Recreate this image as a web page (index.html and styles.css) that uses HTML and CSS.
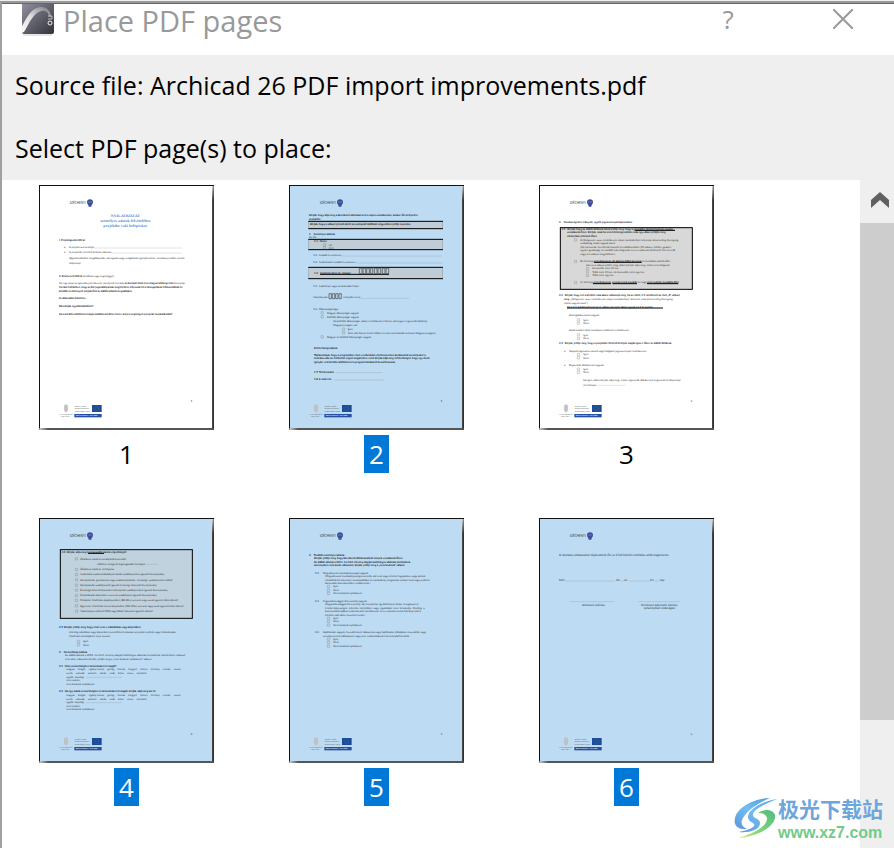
FILE: index.html
```
<!DOCTYPE html>
<html lang="en">
<head>
    <meta charset="UTF-8">
    <meta name="viewport" content="width=device-width, initial-scale=1.0">
    <title>Place PDF pages</title>
    <link rel="stylesheet" href="styles.css">
</head>
<body>

<!-- shared parts of the page previews -->
<svg class="defs" width="0" height="0" aria-hidden="true">
    <defs>
        <linearGradient id="edgeRight" x1="0" y1="0" x2="0" y2="1">
            <stop offset="0" stop-color="#ccc"/>
            <stop offset="0.06" stop-color="#444"/>
            <stop offset="1" stop-color="#444"/>
        </linearGradient>
        <linearGradient id="edgeBottom" x1="0" y1="0" x2="1" y2="0">
            <stop offset="0" stop-color="#ccc"/>
            <stop offset="0.05" stop-color="#555"/>
            <stop offset="1" stop-color="#555"/>
        </linearGradient>
        <g id="box"><path d="M1 -6h7v7h-7z" fill="none" stroke="#777" stroke-width="1"/></g>
        <g id="sheet">
            <rect x="27" y="15" width="525" height="735" fill="#111"/>
            <rect x="546" y="18" width="5" height="732" fill="url(#edgeRight)"/>
            <rect x="28" y="744" width="523" height="6" fill="url(#edgeBottom)"/>
            <rect class="paper" x="30" y="18" width="516" height="726"/>
            <text class="brand" x="119" y="71">SZÉCHENYI</text>
            <path d="M171 66q0-7 9-8q9 1 9 8q0 6-4 9l-1 5h-8l-1-5q-4-3-4-9z" fill="#3d4d98"/>
            <path d="M175 66h4m2 0h4" stroke="#a9b2dc" stroke-width="2"/>
            <path d="M103 678q0-4 5-4q5 0 5 4v12q-1 5-5 7q-4-2-5-7zM102 683h12M108 674v22M103 689h10" fill="#ccc" stroke="#aaa" stroke-width="1"/>
            <text class="tiny" x="87" y="704">MAGYARORSZÁG</text>
            <text class="tiny" x="93" y="710">KORMÁNYA</text>
            <text class="tiny" x="134" y="681">EURÓPAI UNIÓ</text>
            <text class="tiny" x="134" y="688">Európai Strukturális</text>
            <text class="tiny" x="134" y="695">és Beruházási Alapok</text>
            <rect x="186" y="675" width="29" height="21" fill="#1c4c9c"/>
            <circle cx="200" cy="686" r="6" fill="none" stroke="#7d8a5e" stroke-width="2" stroke-dasharray="1 2"/>
            <rect x="133" y="702" width="82" height="10" fill="#2650a0"/>
            <text class="tiny invert" x="137" y="709">BEFEKTETÉS A JÖVŐBE</text>
        </g>
    </defs>
</svg>

<div class="dialog">
    <header class="titlebar">
        <svg class="app-icon" viewBox="0 0 36 34" aria-hidden="true">
            <defs>
                <linearGradient id="tile" x1="0" y1="0" x2="1" y2="1">
                    <stop offset="0" stop-color="#8f8fa0"/>
                    <stop offset="1" stop-color="#33333a"/>
                </linearGradient>
                <linearGradient id="arc" x1="0" y1="1" x2="1" y2="0">
                    <stop offset="0" stop-color="#fff"/>
                    <stop offset="0.5" stop-color="#ddd"/>
                    <stop offset="1" stop-color="#777782"/>
                </linearGradient>
            </defs>
            <path d="M3 0h32v28q0 2-2 2H5q-2 0-2-2z" fill="url(#tile)"/>
            <path d="M4 31h29" stroke="#ccc" stroke-width="1"/>
            <path d="M0 27C7 17 10 4 22 3C29 3 32 8 32 13L30 13C30 9 27 6 22 7C14 9 10 20 5 28Q1 30 0 27z" fill="url(#arc)"/>
            <path d="M29 12h4v3h-4" fill="none" stroke="#bbb" stroke-width="1"/>
            <circle cx="31" cy="19" r="2" fill="none" stroke="#eee" stroke-width="1"/>
        </svg>
        <h1>Place PDF pages</h1>
        <button type="button" class="help" aria-label="Help">?</button>
        <button type="button" class="close" aria-label="Close">
            <svg viewBox="0 0 20 20" aria-hidden="true"><path d="M0 0l20 20M20 0L0 20"/></svg>
        </button>
    </header>

    <section class="info">
        <p>Source file: Archicad 26 PDF import improvements.pdf</p>
        <p>Select PDF page(s) to place:</p>
    </section>

    <main class="browser">
        <div class="pages">
            <button type="button" class="page" aria-pressed="false">
                <svg class="preview" viewBox="27 15 525 735" aria-hidden="true">
                    <use href="#sheet"/>
                    <g class="heading">
                        <text x="286" y="110">NYILATKOZAT</text>
                        <text x="286" y="125">személyes adatok felvételéhez</text>
                        <text x="286" y="140">projektbe való belépéskor</text>
                    </g>
                    <g class="bold">
                        <text x="87" y="184">I. Projektgazda tölti ki:</text>
                        <text x="87" y="324">forrást érdekében, hogy az EU jogszabályainak megfelelően tehessük fel a támogatások felhasználását és</text>
                        <text x="87" y="336">később eredményeit, kérjük Önt az alábbi adatok megadására.</text>
                        <text x="87" y="358">A válaszadás önkéntes.</text>
                        <text x="87" y="380">Köszönjük együttműködését!</text>
                        <text x="87" y="405">Ha a kérdőív kitöltésével kapcsolatban kérdése lenne, kérjen segítséget a projekt munkatársától!</text>
                    </g>
                    <text x="102" y="205">•</text>
                    <text x="117" y="205">A projekt azonosítója:</text>
                    <text x="102" y="220">•</text>
                    <text x="117" y="220">A projektbe történő belépés dátuma:</text>
                    <path class="dots" d="M192 204h263M247 219h208"/>
                    <text x="117" y="236">(Együttműködési megállapodás, támogatás vagy szolgáltatás igénybevétele, munkaszerződés esetén</text>
                    <text x="117" y="252">időpontja)</text>
                    <text x="87" y="290"><tspan class="strong">II. Résztvevő tölti ki</tspan> (önállóan vagy segítséggel)</text>
                    <text x="87" y="312">Ön egy olyan programba jelentkezett, amelynek forrását <tspan class="strong">az Európai Unió és a magyar költségvetés</tspan> biztosítja.</text>
                    <text x="482" y="667">1</text>
                </svg>
                <span class="number">1</span>
            </button>

            <button type="button" class="page selected" aria-pressed="true">
                <svg class="preview" viewBox="27 15 525 735" aria-hidden="true">
                    <use href="#sheet"/>
                    <g class="shade">
                        <rect x="86" y="124" width="402" height="22"/>
                        <rect x="86" y="178" width="402" height="31"/>
                        <rect x="86" y="262" width="402" height="34"/>
                    </g>
                    <path class="rule" d="M85 124h404M85 146h404M85 178h404M85 209h404M85 262h404M85 296h404M120 283h207"/>
                    <g class="bold">
                        <text x="87" y="108">Kérjük, hogy adja meg a következő adatokat arra a napra vonatkozóan, amikor Ön belépett a</text>
                        <text x="87" y="120">projektbe.</text>
                        <text x="90" y="136">Kérjük, hogy a választ jelentő körét az oszlopnál található négyzetben jelölje a pontos</text>
                        <text x="87" y="164">1.    Személyes adatok</text>
                        <text x="102" y="186">1.1.  Neme:</text>
                        <text x="102" y="281">1.4.   Születési ideje (év, hónap)</text>
                        <text x="102" y="506">Elérhetőségi adatok</text>
                        <text x="102" y="527">Tájékoztatjuk, hogy a programban részt vevők közül véletlenszerűen kiválasztott személyeket a</text>
                        <text x="102" y="538">lezárása után az értékelést végző megkérdezi, ezért kérjük adja meg elérhetőségét, hogy egy rövid,</text>
                        <text x="102" y="548">igénybe vett kérdőív kitöltésével a program hatásairól beszélhessünk.</text>
                        <text x="102" y="580">1.7. Telefonszám:</text>
                        <text x="102" y="601">1.8. E-mail cím:</text>
                    </g>
                    <text x="87" y="175">Az Ön</text>
                    <use href="#box" x="129" y="197"/><text x="146" y="197">nő</text>
                    <use href="#box" x="129" y="206"/><text x="146" y="206">férfi</text>
                    <text x="100" y="229">1.2.  Családi és utóneve:</text>
                    <text x="100" y="250">1.3.  Születéskori családi és utóneve:</text>
                    <path class="dots" d="M184 228h303M228 249h259M242 355h145M169 578h139M162 600h148"/>
                    <path class="digits" d="M238 265h8v16h-8zM249 265h8v16h-8zM260 265h8v16h-8zM271 265h7v16h-7zM283 265h8v16h-8zM294 265h8v16h-8zM307 265h8v16h-8zM318 265h8v16h-8zM147 341h7v15h-7zM157 341h7v15h-7zM167 341h7v15h-7zM177 341h7v15h-7z"/>
                    <text x="100" y="320">1.5.  Lakóhelye vagy tartózkodási helye:</text>
                    <text x="99" y="355">irányítószám:</text>
                    <text x="190" y="355">település neve:</text>
                    <text x="100" y="389">1.6.  Állampolgársága</text>
                    <use href="#box" x="122" y="401"/><text x="141" y="401">Magyar állampolgár vagyok</text>
                    <use href="#box" x="122" y="413"/><text x="141" y="413">Külföldi állampolgár vagyok</text>
                    <text x="160" y="425">Ha külföldi állampolgár, akkor rendelkezik-e három vármegyei regisztrált lakóhely</text>
                    <text x="160" y="437">Magyarországon-val:</text>
                    <use href="#box" x="186" y="450"/><text x="203" y="450">Igen</text>
                    <use href="#box" x="186" y="461"/><text x="203" y="461">Nem (Ha három évnél többet és nem tartózkodik tartósan Magyarországon)</text>
                    <use href="#box" x="122" y="473"/><text x="141" y="473">Magyar és külföldi állampolgár vagyok</text>
                    <text x="482" y="667">1</text>
                </svg>
                <span class="number">2</span>
            </button>

            <button type="button" class="page" aria-pressed="false">
                <svg class="preview" viewBox="27 15 525 735" aria-hidden="true">
                    <use href="#sheet"/>
                    <rect class="frame" x="91" y="143" width="396" height="185"/>
                    <path class="rule" d="M314 151h121M192 247h143M189 311h54M247 311h74M351 311h94M111 384h288"/>
                    <g class="bold">
                        <text x="87" y="129">2.    Munkavégzésre irányuló, egyéb jogviszonnyal kapcsolatos</text>
                        <text x="95" y="150">2.1.  Kérjük, hogy az alábbi állítások közül jelölje meg, hogy a projektbe történő belépés napján</text>
                        <text x="111" y="160">vonatkozik Önre. Kérjük, csak ha nem lehetséges közös csak egy válasz jelöljön meg</text>
                        <text x="111" y="171">elsősorban jellemző Önre.</text>
                        <text x="87" y="348">2.2.  Kérjük, hogy ezt a kérdést csak akkor válaszolja meg, ha az előző, 2.1. kérdésnél az első „A” választ</text>
                        <text x="102" y="359">meg.<tspan class="plain"> („Dolgozom, azaz rendelkezem olyan munkahellyel, ahonnan csak átmenetileg (betegség,</tspan></text>
                        <text x="111" y="383">Ha a 2.1. kérdésnél nem az 1. válasz szerepel, akkor ugorjon a 2.3. pontra</text>
                        <text x="87" y="493">2.3.  Kérjük, jelölje meg, hogy a projektbe történő belépés napján igaz-e Önre az alábbi állítások</text>
                    </g>
                    <use href="#box" x="132" y="182"/><text x="151" y="182">A) Dolgozom, azaz rendelkezem olyan munkahellyel, ahonnan átmenetileg (betegség,</text>
                    <text x="151" y="193">szabadság miatt) vagyok távol.</text>
                    <text x="151" y="204">(Ide tartoznak, ha tehetik hasonló és vállalkozóként (10 válasz). Jelölés, gyakori</text>
                    <text x="151" y="214">egyéni gazdasági, és további más dolgozók, és ez is adózott kérdésnél, ha nem a B</text>
                    <text x="151" y="225">vagy a C választ megjelölheti.)</text>
                    <use href="#box" x="132" y="247"/><text x="151" y="247">B) Jelenleg <tspan class="strong">nem dolgozom, de aktívan állást keresek</tspan> és munkába tudnék állni.</text>
                    <text x="169" y="257">Ha ezt a választ jelölte meg, akkor kérjük, adja meg, mióta nem dolgozik:</text>
                    <use href="#box" x="168" y="268"/><text x="187" y="268">Kevesebb, mint fél éve</text>
                    <use href="#box" x="168" y="278"/><text x="187" y="278">Több mint fél éve, de kevesebb, mint egy éve</text>
                    <use href="#box" x="168" y="289"/><text x="187" y="289">Több mint egy éve</text>
                    <use href="#box" x="132" y="310"/><text x="151" y="310">C) Jelenleg <tspan class="strong">nem dolgozom, nem keresek munkát</tspan> és/vagy <tspan class="strong">nem tudnék munkába állni</tspan></text>
                    <text x="102" y="373">miatt) vagyok távol”).</text>
                    <text x="117" y="407">Közfoglalkoztatott vagyok.</text>
                    <use href="#box" x="141" y="422"/><text x="160" y="422">Igen</text>
                    <use href="#box" x="141" y="432"/><text x="160" y="432">Nem</text>
                    <text x="117" y="452">Határozatlan idejű munkaszerződéssel rendelkezem.</text>
                    <use href="#box" x="141" y="467"/><text x="160" y="467">Igen</text>
                    <use href="#box" x="141" y="478"/><text x="160" y="478">Nem</text>
                    <text x="102" y="516">a</text><text x="117" y="516">Nappali tagozatos tanuló vagy hallgatói jogviszonnyal rendelkezem.</text>
                    <use href="#box" x="141" y="526"/><text x="160" y="526">Igen</text>
                    <use href="#box" x="141" y="536"/><text x="160" y="536">Nem</text>
                    <text x="102" y="559">•</text><text x="117" y="559">Regisztrált álláskereső vagyok.</text>
                    <use href="#box" x="141" y="570"/><text x="160" y="570">Igen</text>
                    <use href="#box" x="141" y="580"/><text x="160" y="580">Nem</text>
                    <text x="160" y="602">Ha igen, akkor kérjük, adja meg, mióta regisztrált álláskereső (regisztráció időpontja):</text>
                    <text x="160" y="617">(év/hónap)</text>
                    <path class="dots" d="M200 616h86"/>
                    <text x="482" y="667">3</text>
                </svg>
                <span class="number">3</span>
            </button>

            <button type="button" class="page selected" aria-pressed="true">
                <svg class="preview" viewBox="27 15 525 735" aria-hidden="true">
                    <use href="#sheet"/>
                    <rect class="frame" x="91" y="110" width="396" height="206"/>
                    <path class="rule" d="M174 121h48"/>
                    <g class="bold">
                        <text x="95" y="119">2.4. Kérjük, adja meg legmagasabb iskolai végzettségét:</text>
                        <text x="87" y="346">2.5. Kérjük, jelölje meg, hogy részt vesz-e oktatásban vagy képzésben:</text>
                        <text x="87" y="419">3.    Nemzetiségi adatok</text>
                        <text x="87" y="461">3.1.  Mely nemzetiséghez tartozónak érzi magát?</text>
                        <text x="87" y="537">3.2.  Ha egy másik nemzetiséghez is tartozónak érzi magát, kérjük, adja meg azt is!</text>
                    </g>
                    <use href="#box" x="135" y="140"/><text x="151" y="140">Általános iskola 8 osztályánál kevesebb:</text>
                    <text x="201" y="155">ebből az elvégzett legmagasabb évfolyam:</text>
                    <path class="dots" d="M352 154h33"/>
                    <use href="#box" x="135" y="172"/><text x="151" y="172">Általános iskola 8. évfolyama</text>
                    <use href="#box" x="135" y="187"/><text x="151" y="187">Szakiskola (szakmunkásképző iskola) szakképesítést igazoló bizonyítvány</text>
                    <use href="#box" x="135" y="203"/><text x="151" y="203">Középiskolai, gimnáziumi vagy szakközépiskolai, -érettségi, szakképesítés nélkül</text>
                    <use href="#box" x="135" y="219"/><text x="151" y="219">Középiskolai szakképesítő igazoló érettségi, képesítő bizonyítvány</text>
                    <use href="#box" x="135" y="234"/><text x="151" y="234">Érettségit követő képzésben (középfok) szakképesítést igazoló bizonyítvány</text>
                    <use href="#box" x="135" y="250"/><text x="151" y="250">Felsőoktatás képzésben szerzett szakképzést igazoló bizonyítvány</text>
                    <use href="#box" x="135" y="265"/><text x="151" y="265">Főiskolai, felsőfokú alapképzésben (BA/BSc) szerzett vagy azzal egyenértékű oklevél</text>
                    <use href="#box" x="135" y="281"/><text x="151" y="281">Egyetemi, felsőfokú mesterképzésben (MA/MSc) szerzett vagy azzal egyenértékű oklevél</text>
                    <use href="#box" x="135" y="297"/><text x="151" y="297">Tudományos oklevél (PhD vagy DLA) fokozatot igazoló oklevél</text>
                    <text x="117" y="361">Jelenleg iskolában vagy képzésben (szemléltető oktatást a projekt mellett) vagy felsőoktatási</text>
                    <text x="117" y="372">felsőfokú tanulójaként részt veszek.</text>
                    <use href="#box" x="141" y="388"/><text x="160" y="388">Igen</text>
                    <use href="#box" x="141" y="398"/><text x="160" y="398">Nem</text>
                    <text x="105" y="429">Az alábbi adatok a 2011. évi CLVI. törvény alapján különleges adatnak minősülnek. Ha kérdésre válaszol</text>
                    <text x="105" y="440">nem akar, válaszolni kérdés, jelölje meg a „nem kívánok nyilatkozni” választ.</text>
                    <text x="109" y="472">magyar,    bolgár,    cigány (roma),    görög,    horvát,    lengyel,    német,    örmény,    román,    ruszin,</text>
                    <text x="109" y="483">szerb,    szlovák,    szlovén,    ukrán,    arab,    kínai,    orosz,    vietnámi</text>
                    <text x="109" y="549">magyar,    bolgár,    cigány (roma),    görög,    horvát,    lengyel,    német,    örmény,    román,    ruszin,</text>
                    <text x="109" y="560">szerb,    szlovák,    szlovén,    ukrán,    arab,    kínai,    orosz,    vietnámi</text>
                    <text x="109" y="494">egyéb, éspedig:</text>
                    <text x="109" y="505">nem tudom,</text>
                    <text x="109" y="516">nem kívánok nyilatkozni</text>
                    <text x="109" y="570">egyéb, éspedig:</text>
                    <text x="109" y="581">nem tudom,</text>
                    <text x="109" y="592">nem kívánok nyilatkozni</text>
                    <path class="dots" d="M168 493h107M168 569h107"/>
                    <text x="482" y="667">4</text>
                </svg>
                <span class="number">4</span>
            </button>

            <button type="button" class="page selected" aria-pressed="true">
                <svg class="preview" viewBox="27 15 525 735" aria-hidden="true">
                    <use href="#sheet"/>
                    <g class="bold">
                        <text x="87" y="128">4.    További személyes adatok</text>
                        <text x="102" y="139">Kérjük, jelölje meg, hogy következő állítások közül melyek vonatkozik Önre.</text>
                        <text x="102" y="150">Az alábbi adatok a 2011. évi CXII. törvény alapján különleges adatnak minősülnek.</text>
                        <text x="102" y="160">amennyiben nem kíván válaszolni, kérjük, jelölje meg a „nem kívánok” választ.</text>
                    </g>
                    <text x="105" y="182">4.1.</text><text x="129" y="182">Megváltozott munkaképességű vagyok.</text>
                    <text x="135" y="192">(Megváltozott munkaképességű személy, aki testi vagy értelmi fogyatékos, vagy akinek</text>
                    <text x="135" y="203">rehabilitációt követően munkavállalási és munkahely-megtartási esélyei testi vagy szellemi</text>
                    <text x="135" y="213">károsodás következtében csökkennek.)</text>
                    <use href="#box" x="141" y="223"/><text x="160" y="223">Igen</text>
                    <use href="#box" x="141" y="234"/><text x="160" y="234">Nem</text>
                    <use href="#box" x="141" y="244"/><text x="160" y="244">Nem kívánok nyilatkozni</text>
                    <text x="105" y="266">4.2.</text><text x="129" y="266">Fogyatékossággal élő személy vagyok.</text>
                    <text x="135" y="276">(Fogyatékossággal élő személy: aki ortopéniai, így különösen látási, mozgásszervi</text>
                    <text x="135" y="287">értelmi képességeit  jelentős  mértékben  vagy  egyáltalán  nem  birtokolja,  illetőleg  a</text>
                    <text x="135" y="297">kommunikációjában számottevően korlátozott, és ez számára tartós hátrányt jelent</text>
                    <text x="135" y="308">életben való aktív részvétel során.)</text>
                    <use href="#box" x="141" y="318"/><text x="160" y="318">Igen</text>
                    <use href="#box" x="141" y="328"/><text x="160" y="328">Nem</text>
                    <use href="#box" x="141" y="339"/><text x="160" y="339">Nem kívánok nyilatkozni</text>
                    <text x="105" y="360">4.3.</text><text x="129" y="360">Hajléktalan vagyok, hozzáférésem lakásomat vagy hajléktalan ellátásban részesülök, vagy</text>
                    <text x="129" y="371">veszélyeztetett lakhatásom vagy nem tudok lakással intézményből kerülök.</text>
                    <use href="#box" x="141" y="381"/><text x="160" y="381">Igen</text>
                    <use href="#box" x="141" y="391"/><text x="160" y="391">Nem</text>
                    <use href="#box" x="141" y="402"/><text x="160" y="402">Nem kívánok nyilatkozni</text>
                    <text x="482" y="667">5</text>
                </svg>
                <span class="number">5</span>
            </button>

            <button type="button" class="page selected" aria-pressed="true">
                <svg class="preview" viewBox="27 15 525 735" aria-hidden="true">
                    <use href="#sheet"/>
                    <g class="large">
                        <text x="87" y="130">A részletes adatkezelési tájékoztatót Ön az 1524 Kérdőív kitöltése előtt megismerte.</text>
                        <text x="87" y="205">Kelt</text>
                        <text x="258" y="205">20</text>
                        <text x="283" y="205">év</text>
                        <text x="361" y="205">hó</text>
                        <text x="389" y="205">nap</text>
                        <text x="155" y="278">résztvevő aláírása</text>
                        <text x="333" y="278">törvényes képviselő aláírása</text>
                        <text x="341" y="289">(amennyiben szükséges)</text>
                    </g>
                    <path class="dots" d="M106 204h150M270 204h11M297 204h61M374 204h12M121 266h131M325 266h126"/>
                    <text x="482" y="667">6</text>
                </svg>
                <span class="number">6</span>
            </button>
        </div>

        <div class="scrollbar">
            <button type="button" class="scroll-up" aria-label="Scroll up">
                <svg viewBox="0 0 18 16" aria-hidden="true"><path d="M9 0l9 8v8L9 8l-9 8V8z"/></svg>
            </button>
            <div class="track"><div class="thumb"></div></div>
        </div>
    </main>
</div>

<div class="watermark">
    <svg viewBox="0 0 44 42" aria-hidden="true">
        <defs>
            <linearGradient id="swirlBlue" x1="1" y1="0" x2="0" y2="1">
                <stop offset="0" stop-color="#4f9fe0"/>
                <stop offset="0.5" stop-color="#72bdf0"/>
                <stop offset="1" stop-color="#5b95da"/>
            </linearGradient>
            <linearGradient id="swirlGreen" x1="1" y1="0" x2="0" y2="1">
                <stop offset="0" stop-color="#52bc7c"/>
                <stop offset="0.6" stop-color="#83d47d"/>
                <stop offset="1" stop-color="#e5e77a"/>
            </linearGradient>
        </defs>
        <path d="M36 1C22 1 4 9 1 21C-1 29 5 33 13 32C8 30 6 26 9 21C14 12 26 5 36 1z" fill="url(#swirlBlue)"/>
        <path d="M43 2C29 4 14 12 14 20C14 26 22 25 20 29C18 32 10 34 5 35C15 36 25 33 26 27C27 21 19 22 19 18C19 12 33 6 43 2z" fill="url(#swirlBlue)"/>
        <path d="M24 16C31 11 39 13 41 18C43 28 25 40 4 41C19 37 34 29 33 21C32 17 28 16 24 16z" fill="url(#swirlGreen)"/>
    </svg>
    <div>
        <div class="site-name" lang="zh-CN">极光下载站</div>
        <div class="site-url">www.xz7.com</div>
    </div>
</div>

</body>
</html>
```
FILE: styles.css
```
* {
    box-sizing: border-box;
}

body {
    display: flex;
    flex-direction: column;
    min-height: 100vh;
    margin: 0;
    border-top: 1px solid #eee;
    font-family: "Open Sans", "Noto Sans", sans-serif;
    color: #000;
    background: #fff;
}

button {
    padding: 0;
    border: 0;
    background: none;
    font: inherit;
    color: inherit;
}

h1, p {
    margin: 0;
    font-weight: normal;
}

.defs {
    position: absolute;
}

.dialog {
    flex: 1;
    display: flex;
    flex-direction: column;
    border-top: 2px solid #999;
    border-left: 2px solid #a0a0a0;
}

.titlebar {
    display: flex;
    align-items: flex-start;
    height: 52px;
    padding: 0 41px 0 17px;
    border-top: 1px solid #666;
    color: #999;
}

.app-icon {
    width: 36px;
    height: 34px;
    margin-right: 8px;
}

.titlebar h1 {
    flex: 1;
    font-size: 29px;
    line-height: 34px;
}

.help {
    width: 30px;
    margin-right: 90px;
    font-size: 26px;
    line-height: 30px;
}

.close {
    height: 30px;
}

.close svg {
    display: block;
    width: 20px;
    height: 20px;
    fill: none;
    stroke: #999;
    stroke-width: 2;
}

.info {
    padding: 0 13px;
    background: #efefef;
    font-size: 25px;
}

.info p {
    line-height: 60px;
}

.info p:last-child {
    padding: 3px 0 2px;
}

.browser {
    display: flex;
    flex: 1;
}

.pages {
    flex: 1;
    display: grid;
    grid-template-columns: repeat(auto-fill, 175px);
    align-content: start;
    gap: 45px 75px;
    padding: 5px 37px 40px;
}

.page {
    display: flex;
    flex-direction: column;
    align-items: center;
    gap: 5px;
}

.preview {
    display: block;
    width: 175px;
    height: 245px;
}

.number {
    padding: 0 5px;
    font-size: 26px;
    line-height: 38px;
}

.selected .number {
    background: #0078d7;
    color: #fff;
}

/* page previews */
.selected {
    --paper: #bddbf3;
}

.paper {
    fill: var(--paper, #fff);
}

.preview text {
    font-family: Lato, sans-serif;
    font-size: 8px;
    fill: #333;
    text-rendering: geometricPrecision;
    white-space: pre;
}

.preview .bold text,
.preview .strong {
    font-weight: bold;
    fill: #111;
}

.preview .plain {
    font-weight: normal;
    fill: #333;
}

.preview .heading text {
    font-family: "Liberation Serif", serif;
    font-size: 12px;
    font-weight: bold;
    fill: #4a8ccb;
    text-anchor: middle;
}

.preview .large text {
    font-size: 9px;
}

.brand {
    font: 9px Lato, sans-serif;
    fill: #444;
}

.tiny {
    font: 5px Lato, sans-serif;
    fill: #666;
}

.invert {
    font-size: 6px;
    fill: #fff;
}

.dots {
    fill: none;
    stroke: #777;
    stroke-width: 1;
    stroke-dasharray: 2 1;
}

.rule {
    fill: none;
    stroke: #000;
    stroke-width: 3;
}

.digits {
    fill: none;
    stroke: #444;
    stroke-width: 2;
}

.shade rect {
    fill: #c0ccd6;
    stroke: #777;
    stroke-width: 1;
}

.frame {
    fill: #d8d8d8;
    stroke: #000;
    stroke-width: 3;
}

.selected .frame {
    fill: #c0d2de;
}

.scrollbar {
    display: flex;
    flex-direction: column;
    width: 34px;
    background: #efefef;
}

.scroll-up {
    height: 43px;
    padding: 0 0 0 5px;
}

.scroll-up svg {
    width: 18px;
    height: 16px;
    fill: #606060;
}

.track {
    flex: 1;
    display: grid;
    grid-template-rows: 31fr 8fr;
}

.thumb {
    background: #cdcdcd;
}

/* site mark over the lower right corner */
.watermark {
    position: absolute;
    right: 11px;
    bottom: 6px;
    display: flex;
    align-items: center;
}

.watermark svg {
    width: 44px;
    height: 42px;
}

.site-name {
    font-family: "Noto Sans CJK SC", sans-serif;
    font-size: 21px;
    font-weight: bold;
    line-height: 31px;
    color: #6ea6dc;
}

.site-url {
    font-family: "Liberation Sans", Arial, sans-serif;
    font-size: 16px;
    font-weight: bold;
    line-height: 18px;
    color: #72cb88;
}
```
